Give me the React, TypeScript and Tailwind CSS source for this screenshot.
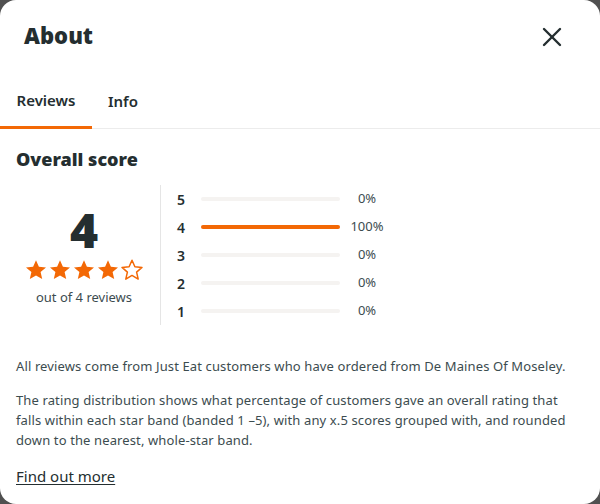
import { X } from "lucide-react";

const rows = [
  { band: 5, pct: 0 },
  { band: 4, pct: 100 },
  { band: 3, pct: 0 },
  { band: 2, pct: 0 },
  { band: 1, pct: 0 },
];

function Star({ filled }: { filled: boolean }) {
  return (
    <svg viewBox="0 0 24 24" className="w-[24px] h-[24px]">
      <path
        d="M12 2.2l2.9 6.6 7.1.6-5.4 4.7 1.6 7-6.2-3.7-6.2 3.7 1.6-7L2 9.4l7.1-.6z"
        fill={filled ? "#f36805" : "none"}
        stroke="#f36805"
        strokeWidth={filled ? 0 : 1.5}
        strokeLinejoin="round"
      />
    </svg>
  );
}

export default function App() {
  const heading = "font-black text-[#242e30]";
  return (
    <div className="w-[600px] h-[504px] bg-[#505050] font-['Noto_Sans',sans-serif]">
      <div className="w-full h-full bg-white rounded-2xl overflow-hidden flex flex-col">
        <div className="shrink-0 flex justify-between pl-6 pr-8 pt-[20px] h-[74px] items-start">
          <h1 className={`${heading} text-[22px] leading-[30px]`}>About</h1>
          <X className="w-[32px] h-[32px] text-[#242e30] mt-[1px]" strokeWidth={1.8} />
        </div>

        <div className="shrink-0 flex border-b border-[#ececec] h-[55px]">
          <div className="w-[92px] flex items-center justify-center border-b-[3px] border-[#f36805] -mb-px text-[15px] font-semibold text-[#242e30]">
            Reviews
          </div>
          <div className="px-4 flex items-center text-[15px] font-semibold text-[#242e30]">Info</div>
        </div>

        <div className="shrink-0 px-4 pt-[18px]">
          <h2 className={`${heading} text-[18px] leading-[24px]`}>Overall score</h2>

          <div className="flex mt-[14px]">
            <div className="w-[136px] mr-[8px] flex flex-col items-center pt-[18px]">
              <div className={`${heading} text-[48px] leading-[54px]`}>4</div>
              <div className="flex mt-[1px]">
                <Star filled />
                <Star filled />
                <Star filled />
                <Star filled />
                <Star filled={false} />
              </div>
              <div className="text-[13px] text-[#3c4c4f] mt-[6px]">out of 4 reviews</div>
            </div>

            <div className="border-l border-[#e5e5e5] h-[140px] pl-4 flex flex-col justify-center">
              {rows.map((r) => (
                <div key={r.band} className="flex items-center h-[28px]">
                  <span className="w-[24px] text-[14px] font-semibold text-[#242e30]">{r.band}</span>
                  <div className="w-[139px] h-[4px] rounded-full bg-[#f5f3f1]">
                    <div className="h-full rounded-full bg-[#f36805]" style={{ width: `${r.pct}%` }} />
                  </div>
                  <span className="w-[50px] ml-[2px] text-center text-[13px] text-[#3c4c4f]">{r.pct}%</span>
                </div>
              ))}
            </div>
          </div>

          <div className="mt-[31px] text-[13px] leading-[20px] tracking-[0.12px] text-[#3c4c4f]">
            <p>All reviews come from Just Eat customers who have ordered from De Maines Of Moseley.</p>
            <p className="mt-[14px]">
              The rating distribution shows what percentage of customers gave an overall rating that falls within
              each star band (banded 1 –5), with any x.5 scores grouped with, and rounded down to the nearest,
              whole-star band.
            </p>
          </div>

          <a className="block mt-[15px] text-[15px] leading-[22px] text-[#242e30] underline underline-offset-2">
            Find out more
          </a>
        </div>
      </div>
    </div>
  );
}
